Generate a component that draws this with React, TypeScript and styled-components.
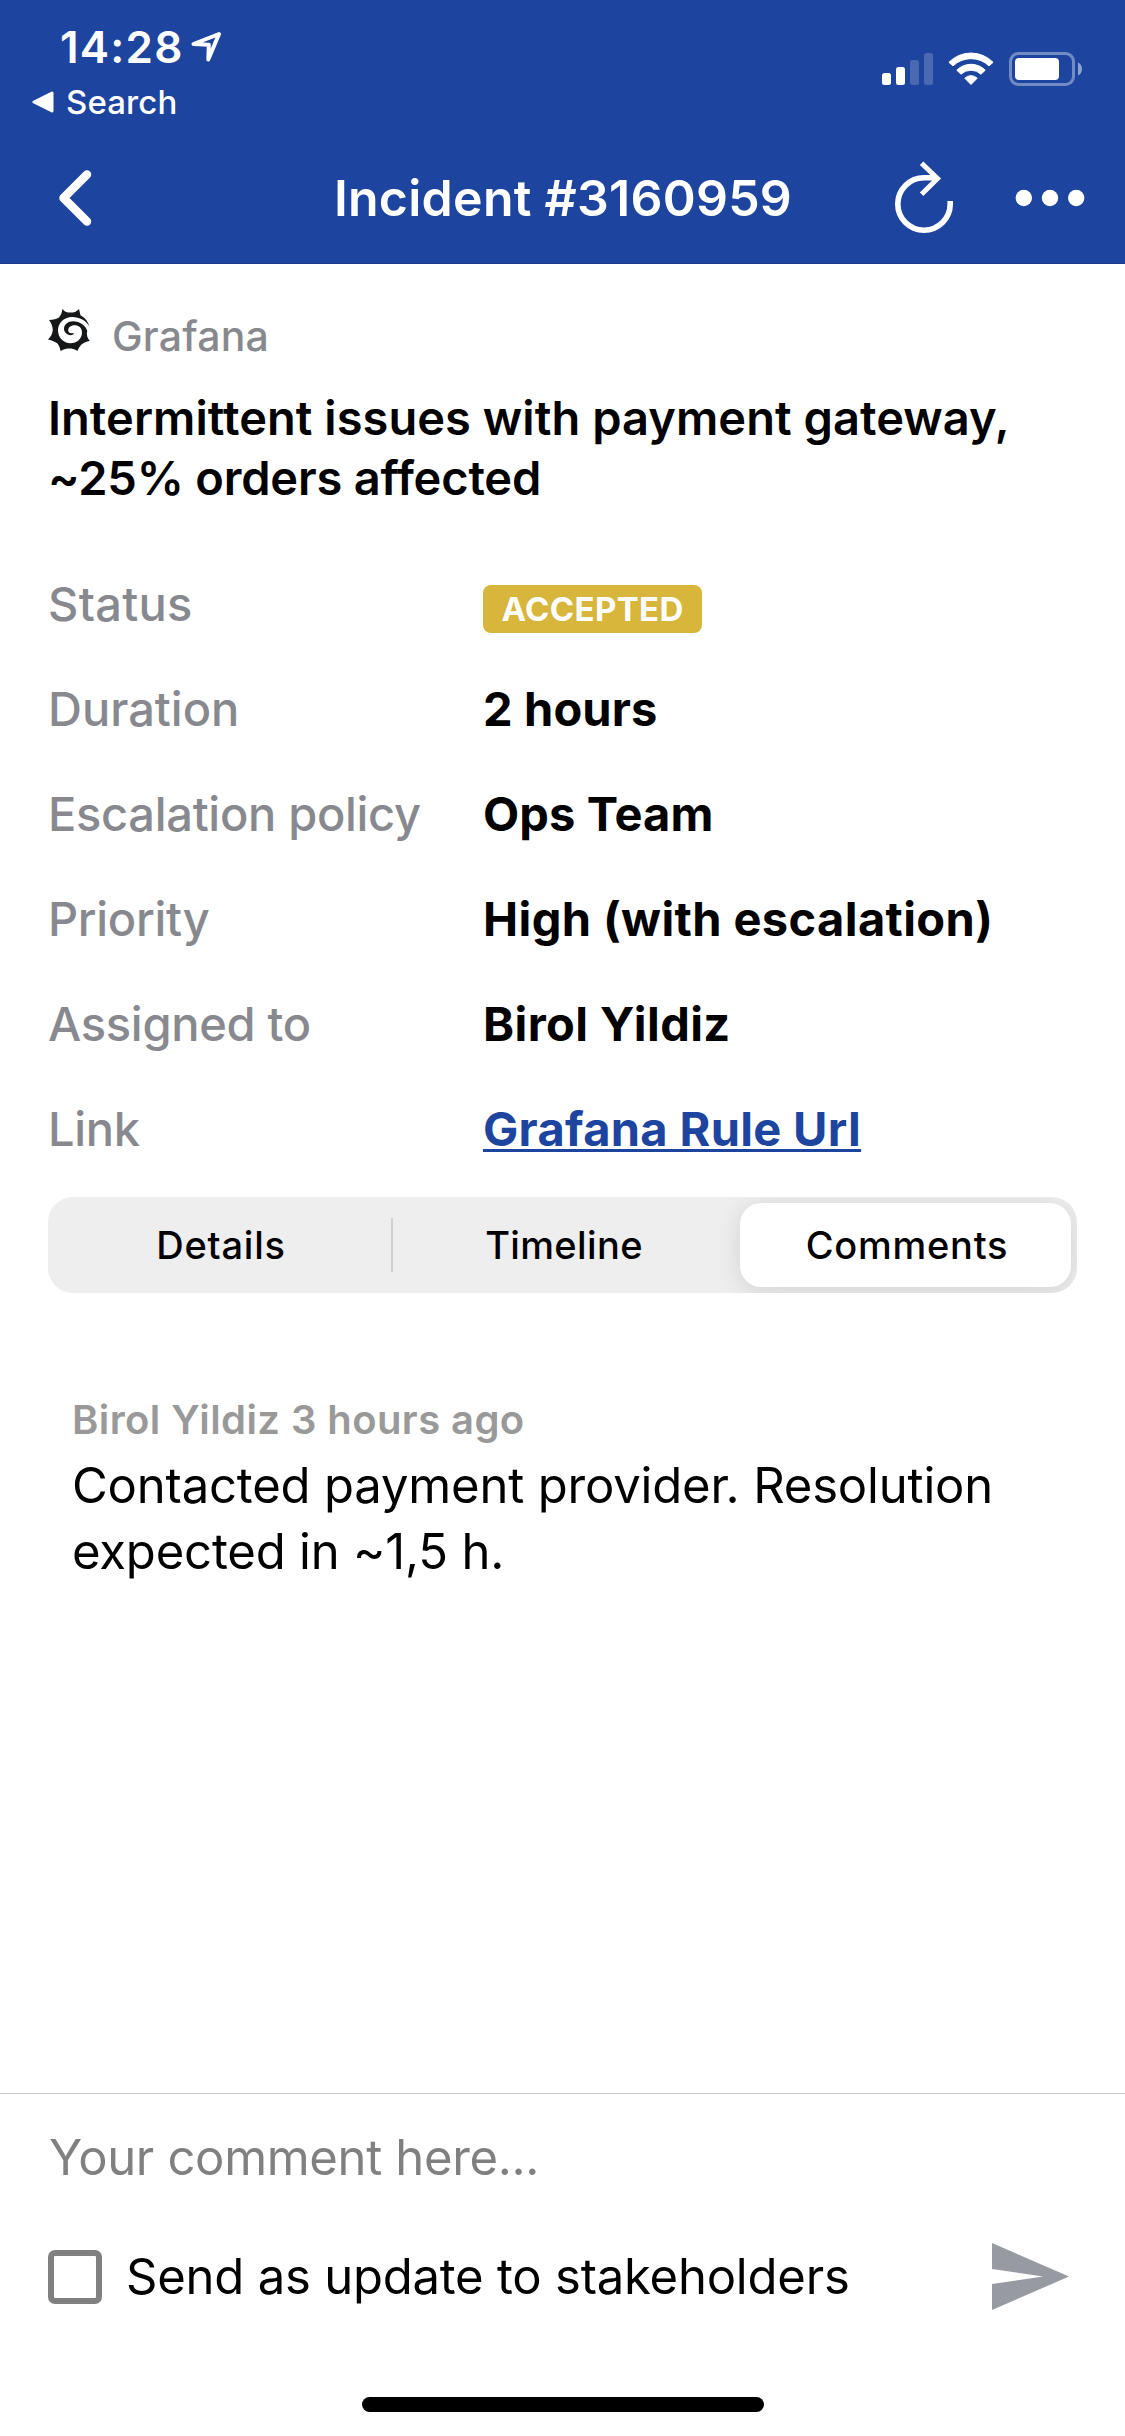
import React from "react";
import styled, { createGlobalStyle } from "styled-components";

const BLUE = "#1d449e";
const LABEL_GRAY = "#88898e";

const GlobalStyle = createGlobalStyle`
  * { box-sizing: border-box; }
  html, body { margin: 0; padding: 0; background: #fff; }
  body {
    font-family: Inter, "Liberation Sans", sans-serif;
    font-variant-ligatures: none;
    color: #000;
  }
  svg { display: block; flex: none; }
`;

const Screen = styled.div`
  display: flex;
  flex-direction: column;
  width: 1125px;
  height: 2436px;
  background: #fff;
  overflow: hidden;
`;

const Header = styled.header`
  height: 264px;
  background: ${BLUE};
  color: #fff;
  box-shadow: inset 0 -1px 0 #1b3b88;
`;

const StatusBar = styled.div`
  display: flex;
  justify-content: space-between;
  height: 132px;
  padding: 20px 43px 0 32px;
`;

const ClockArea = styled.div`
  display: flex;
  flex-direction: column;
  gap: 8px;
`;

const ClockRow = styled.div`
  display: flex;
  align-items: center;
  height: 54px;
  padding-left: 28px;
  gap: 6px;
`;

const Clock = styled.span`
  font-size: 44px;
  font-weight: 600;
  letter-spacing: 1.2px;
  line-height: 54px;
`;

const BackToApp = styled.div`
  display: flex;
  align-items: center;
  height: 40px;
  gap: 12px;
  font-size: 33px;
  font-weight: 500;
  letter-spacing: 0.1px;
  line-height: 40px;
`;

const Indicators = styled.div`
  display: flex;
  gap: 15px;
  height: 34px;
  margin-top: 32px;
`;

const NavBar = styled.nav`
  display: grid;
  grid-template-columns: 1fr auto 1fr;
  align-items: center;
  height: 132px;
  padding: 0 39px 0 56px;
`;

const NavTitle = styled.h1`
  margin: 0 0 0 -16px;
  font-size: 50px;
  font-weight: 600;
  letter-spacing: 0.26px;
  line-height: 60px;
  white-space: nowrap;
`;

const NavActions = styled.div`
  display: flex;
  align-items: center;
  justify-content: flex-end;
  gap: 60px;
`;

const Content = styled.main`
  flex: 1;
  padding: 42px 48px 0;
`;

const Source = styled.div`
  display: flex;
  align-items: flex-start;
  height: 60px;
  gap: 22px;

  svg {
    margin-top: 3px;
  }
`;

const SourceName = styled.span`
  color: ${LABEL_GRAY};
  font-size: 41px;
  font-weight: 500;
  letter-spacing: 0.2px;
  line-height: 60px;
`;

const Summary = styled.h2`
  margin: 22px 0 43px;
  font-size: 47px;
  font-weight: 600;
  line-height: 60px;
  white-space: nowrap;
`;

const SummaryLine = styled.span<{ $tracking: number }>`
  display: block;
  letter-spacing: ${(p) => p.$tracking}px;
`;

const Facts = styled.dl`
  margin: 0;
`;

const Fact = styled.div`
  display: grid;
  grid-template-columns: 435px 1fr;
  align-items: center;
  height: 105px;
  font-size: 47px;
  line-height: 60px;
  white-space: nowrap;
`;

const FactLabel = styled.dt<{ $tracking: number }>`
  color: ${LABEL_GRAY};
  font-weight: 500;
  letter-spacing: ${(p) => p.$tracking}px;
`;

const FactValue = styled.dd<{ $tracking: number }>`
  margin: 0;
  font-weight: 700;
  letter-spacing: ${(p) => p.$tracking}px;
`;

const FactLink = styled.a`
  color: ${BLUE};
  text-decoration: underline;
  text-decoration-thickness: 3px;
  text-underline-offset: 3px;
  text-decoration-skip-ink: none;
`;

const Badge = styled.span`
  display: flex;
  align-items: center;
  justify-content: center;
  width: 219px;
  height: 48px;
  margin-top: 11px;
  border-radius: 8px;
  background: #d8b63c;
  color: #fff;
  font-size: 33px;
  font-weight: 700;
  letter-spacing: 0.35px;
  line-height: 48px;
`;

const Tabs = styled.div`
  display: flex;
  height: 96px;
  margin-top: 16px;
  border-radius: 25px;
  background: #eeeeee;
  overflow: hidden;
`;

const Tab = styled.div<{ $selected?: boolean; $tracking: number }>`
  display: flex;
  align-items: center;
  justify-content: center;
  flex: none;
  width: ${(p) => (p.$selected ? "331px" : "343px")};
  margin: ${(p) => (p.$selected ? "6px" : "0")};
  padding-left: 3px;
  border-radius: ${(p) => (p.$selected ? "21px" : "0")};
  background: ${(p) => (p.$selected ? "#fff" : "transparent")};
  box-shadow: ${(p) => (p.$selected ? "0 4px 24px rgba(0, 0, 0, 0.12)" : "none")};
  font-size: 38px;
  font-weight: 500;
  letter-spacing: ${(p) => p.$tracking}px;
`;

const TabDivider = styled.div`
  width: 2px;
  height: 54px;
  margin: 21px -2px 0 0;
  background: #d0d0d0;
`;

const Comment = styled.article`
  margin-top: 97px;
  padding-left: 24px;
  white-space: nowrap;
`;

const CommentMeta = styled.div`
  color: #999;
  font-size: 40px;
  font-weight: 600;
  letter-spacing: 0.42px;
  line-height: 60px;
`;

const CommentText = styled.p`
  margin: 3px 0 0;
  font-size: 49px;
  letter-spacing: -0.18px;
  line-height: 66px;
`;

const Composer = styled.footer`
  display: flex;
  flex-direction: column;
  height: 343px;
  padding: 34px 56px 24px 48px;
  border-top: 1px solid #c6c6c8;
`;

const Placeholder = styled.div`
  padding-left: 1px;
  color: #808080;
  font-size: 49px;
  letter-spacing: -0.33px;
  line-height: 60px;
`;

const SendRow = styled.div`
  display: flex;
  align-items: center;
  height: 68px;
  margin-top: 55px;
`;

const Checkbox = styled.span`
  width: 54px;
  height: 54px;
  border: 6px solid #808080;
  border-radius: 7px;
`;

const CheckboxLabel = styled.span`
  flex: 1;
  margin-left: 24px;
  font-size: 49px;
  letter-spacing: -0.22px;
  line-height: 60px;
`;

const HomeIndicator = styled.div`
  width: 402px;
  height: 15px;
  margin: auto 0 0 314px;
  border-radius: 8px;
  background: #000;
`;

const LocationIcon = () => (
  <svg width="32" height="32" viewBox="190 31 32 32">
    <path d="M219 34 193.5 44 208.8 44.8 208.3 59.5Z" fill="none" stroke="#fff" strokeWidth="4" strokeLinejoin="round" />
  </svg>
);

const BackTriangle = () => (
  <svg width="22" height="22" viewBox="0 0 22 22">
    <path d="M2 11 20 2V20Z" fill="#fff" stroke="#fff" strokeWidth="3" strokeLinejoin="round" />
  </svg>
);

const SignalIcon = () => (
  <svg width="51" height="34" viewBox="882 52 51 34" fill="#fff">
    <rect x="882" y="73" width="9" height="12" rx="2.5" />
    <rect x="896" y="67" width="9" height="18" rx="2.5" />
    <rect x="910" y="60" width="9" height="25" rx="2.5" opacity="0.2" />
    <rect x="924" y="53" width="9" height="32" rx="2.5" opacity="0.2" />
  </svg>
);

const WifiIcon = () => (
  <svg width="46" height="34" viewBox="948 52 46 34" fill="#fff" stroke="#fff" strokeWidth="1" strokeLinejoin="round">
    <path d="M948.9 62.3A31 31 0 0 1 993.1 62.3L989 65.9A26 26 0 0 0 953 65.9Z" />
    <path d="M956.8 70.2A20 20 0 0 1 985.2 70.2L981 74.2A14.5 14.5 0 0 0 961 74.2Z" />
    <path d="M964.8 78.2A8.8 8.8 0 0 1 977.2 78.2L971 84.5Z" />
  </svg>
);

const BatteryIcon = () => (
  <svg width="73" height="34" viewBox="1009 52 73 34">
    <rect x="1010.5" y="53.5" width="63" height="31" rx="8" fill="none" stroke="#fff" strokeWidth="3" opacity="0.38" />
    <rect x="1015" y="58" width="44" height="22" rx="4" fill="#fff" />
    <path d="M1078 62.5C1080.5 63.5 1082 66 1082 69S1080.5 74.5 1078 75.5Z" fill="#fff" opacity="0.5" />
  </svg>
);

const BackIcon = () => (
  <svg width="36" height="64" viewBox="56 166 36 64">
    <path d="M87 174.5 63.5 198 87 221.5" fill="none" stroke="#fff" strokeWidth="8.5" strokeLinecap="round" strokeLinejoin="round" />
  </svg>
);

const RefreshIcon = () => (
  <svg width="60" height="74" viewBox="894 161 60 74" fill="none" stroke="#fff">
    <path d="M950.2 201V204A26.2 26.2 0 1 1 924 177.8H936" strokeWidth="5.6" />
    <path d="M921.6 163.2 937.5 178.5 921.6 194.2" strokeWidth="5" />
  </svg>
);

const MoreIcon = () => (
  <svg width="72" height="20" viewBox="1014 188 72 20" fill="#fff">
    <circle cx="1023.8" cy="198" r="8.2" />
    <circle cx="1050" cy="198" r="8.2" />
    <circle cx="1076.2" cy="198" r="8.2" />
  </svg>
);

const GrafanaLogo = () => (
  <svg width="42" height="42" viewBox="0 0 42 42">
    <path
      d="M14.3 0C17 3 19 3.6 22.5 3.6S28 3 31 0L32.5 6.3C37.5 9 40.5 13 41.4 18L38.8 23.5C39 27 39.5 29.500 41.8 32C38 32.500 36 33.500 33.500 35.500C31.500 37.500 30.500 39 29.5 42C26.500 40 24 39.500 21.4 39.5S16 40 12.5 42C12 39 11.500 37.500 9.500 34.500C7 32.500 4 31.500 0 30.5C3 27.500 4.300 25 4.8 21C4.500 17 3.500 14 1 11C5.500 11 8.500 10 11 8.500C13 6 14 3.500 14.300 0Z"
      fill="#161719"
    />
    <path
      d="M41.4 17.5C38 11.5 31.5 8 24.5 8C15 8 10 14.5 10 21.5C10 28.5 15.5 34.3 22.5 34.3C29 34.3 34 29.5 34 23.5C34 18.8 30.5 16.3 26.5 16.3C22.5 16.3 20.2 18.8 20.2 21.4C20.2 23.4 22 24.8 25.4 23.9C26.5 25 24.5 26.3 22.5 26.2C18.5 26 16 22.8 16 19.8C16 15.5 20 12.3 25 12.3C32 12.3 38 17 39.5 22.5L43 22Z"
      fill="#fff"
    />
  </svg>
);

const SendIcon = () => (
  <svg width="77" height="68" viewBox="992 2242 77 68">
    <path d="M992 2242 1069 2275.5 992 2309V2283L1043 2275.5 992 2268Z" fill="#989aa1" />
  </svg>
);

type FactItem = {
  label: string;
  labelTracking: number;
  value: string;
  valueTracking?: number;
  kind?: "badge" | "link";
};

const facts: FactItem[] = [
  { label: "Status", labelTracking: 0.29, value: "ACCEPTED", kind: "badge" },
  { label: "Duration", labelTracking: 0, value: "2 hours", valueTracking: 0.13 },
  { label: "Escalation policy", labelTracking: -0.3, value: "Ops Team", valueTracking: 0.1 },
  { label: "Priority", labelTracking: -0.3, value: "High (with escalation)", valueTracking: 0.4 },
  { label: "Assigned to", labelTracking: -0.3, value: "Birol Yildiz", valueTracking: 0.42 },
  { label: "Link", labelTracking: -0.3, value: "Grafana Rule Url", valueTracking: 0.33, kind: "link" },
];

function FactContent({ item }: { item: FactItem }) {
  if (item.kind === "badge") return <Badge>{item.value}</Badge>;
  if (item.kind === "link") return <FactLink>{item.value}</FactLink>;
  return <>{item.value}</>;
}

export default function App() {
  return (
    <Screen>
      <GlobalStyle />
      <Header>
        <StatusBar>
          <ClockArea>
            <ClockRow>
              <Clock>14:28</Clock>
              <LocationIcon />
            </ClockRow>
            <BackToApp>
              <BackTriangle />
              <span>Search</span>
            </BackToApp>
          </ClockArea>
          <Indicators>
            <SignalIcon />
            <WifiIcon />
            <BatteryIcon />
          </Indicators>
        </StatusBar>
        <NavBar>
          <BackIcon />
          <NavTitle>Incident #3160959</NavTitle>
          <NavActions>
            <RefreshIcon />
            <MoreIcon />
          </NavActions>
        </NavBar>
      </Header>

      <Content>
        <Source>
          <GrafanaLogo />
          <SourceName>Grafana</SourceName>
        </Source>
        <Summary>
          <SummaryLine $tracking={0.05}>Intermittent issues with payment gateway,</SummaryLine>
          <SummaryLine $tracking={-0.19}>~25% orders affected</SummaryLine>
        </Summary>
        <Facts>
          {facts.map((item) => (
            <Fact key={item.label}>
              <FactLabel $tracking={item.labelTracking}>{item.label}</FactLabel>
              <FactValue $tracking={item.valueTracking ?? 0}>
                <FactContent item={item} />
              </FactValue>
            </Fact>
          ))}
        </Facts>
        <Tabs>
          <Tab $tracking={0.8}>Details</Tab>
          <TabDivider />
          <Tab $tracking={0.36}>Timeline</Tab>
          <Tab $selected $tracking={0.75}>Comments</Tab>
        </Tabs>
        <Comment>
          <CommentMeta>Birol Yildiz 3 hours ago</CommentMeta>
          <CommentText>
            Contacted payment provider. Resolution
            <br />
            expected in ~1,5 h.
          </CommentText>
        </Comment>
      </Content>

      <Composer>
        <Placeholder>Your comment here...</Placeholder>
        <SendRow>
          <Checkbox />
          <CheckboxLabel>Send as update to stakeholders</CheckboxLabel>
          <SendIcon />
        </SendRow>
        <HomeIndicator />
      </Composer>
    </Screen>
  );
}
